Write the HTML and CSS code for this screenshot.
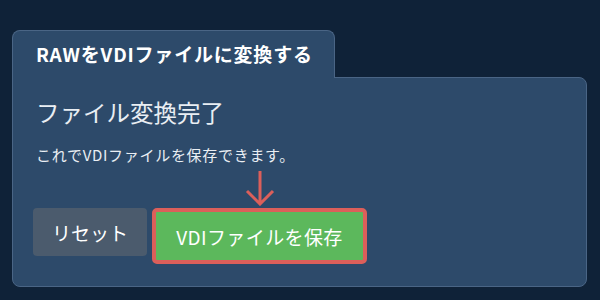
FILE: index.html
```html
<!DOCTYPE html>
<html lang="ja">
<head>
  <meta charset="UTF-8" />
  <meta name="viewport" content="width=device-width, initial-scale=1.0"/>
  <title>RAWをVDIファイルに変換する</title>
  <link rel="stylesheet" href="styles.css">
</head>
<body>

<div class="card">
  <div class="tab">RAWをVDIファイルに変換する</div>
  <div class="panel">
    <h2 class="heading">ファイル変換完了</h2>
    <p class="message">これでVDIファイルを保存できます。</p>
    <div class="actions">
      <button class="reset">リセット</button>
      <div class="save-wrap">
        <svg class="arrow" width="30" height="36" viewBox="0 0 30 36">
          <path d="M15 1 V34 M2 21 L15 34 L28 21" fill="none" stroke="#dc5f5a" stroke-width="3"/>
        </svg>
        <button class="save">VDIファイルを保存</button>
      </div>
    </div>
  </div>
</div>

</body>
</html>
```

FILE: styles.css
```css
body {
  font-family: "Noto Sans CJK JP", "Noto Sans", sans-serif;
  background: #0f2238;
  margin: 0;
  color: #fff;
}
.card {
  padding: 30px 0 0 12px;
  width: 575px;
}
.tab {
  display: inline-block;
  position: relative;
  z-index: 1;
  box-sizing: border-box;
  width: 323px;
  margin-bottom: -1px;
  padding: 12px 0 13px 23px;
  font-size: 19px;
  line-height: 22px;
  font-weight: bold;
  letter-spacing: 0.8px;
  white-space: nowrap;
  background: #2d4a6a;
  border: 1px solid #4a6585;
  border-bottom: none;
  border-radius: 8px 8px 0 0;
}
.panel {
  background: #2d4a6a;
  border: 1px solid #4a6585;
  border-radius: 0 8px 8px 8px;
  padding: 17px 24px 19px 23px;
  height: 172px;
}
.heading {
  margin: 0;
  font-size: 23.5px;
  font-weight: normal;
  line-height: 34px;
  color: #e9eef3;
}
.message {
  margin: 15px 0 0;
  font-size: 15px;
  line-height: 22px;
  letter-spacing: 0.7px;
  color: #e9eef3;
}
.actions {
  display: flex;
  align-items: flex-start;
  gap: 5px;
  margin: 42px 0 0 -3px;
}
button {
  font-family: inherit;
  font-size: 19px;
  color: #fff;
  border: none;
  cursor: pointer;
}
.reset {
  width: 114px;
  height: 48px;
  background: #4b5b6d;
  border-radius: 4px;
}
.save-wrap {
  position: relative;
}
.save {
  width: 215px;
  height: 56px;
  letter-spacing: 0.4px;
  background: #5cb85c;
  border: 4px solid #dc5f5a;
  border-radius: 5px;
}
.arrow {
  position: absolute;
  left: 50%;
  bottom: 100%;
  margin: 0 0 2px -15px;
}
```
